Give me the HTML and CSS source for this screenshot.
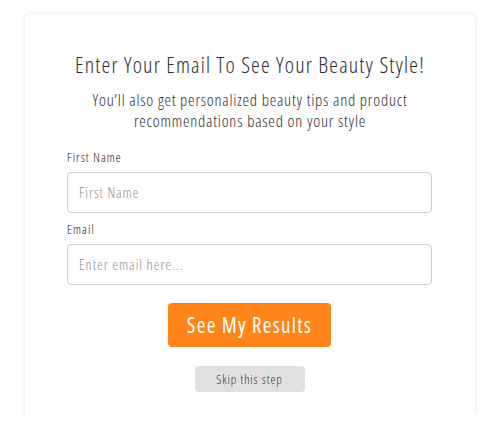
FILE: index.html
```html
<!DOCTYPE html>
<html>
<head>
<meta charset="utf-8">
<link rel="stylesheet" href="styles.css">
</head>
<body>
<div class="card">
  <h1 class="title">Enter Your Email To See Your Beauty Style!</h1>
  <p class="subtitle">You’ll also get personalized beauty tips and product recommendations based on your style</p>
  <form class="form">
    <label class="label" for="fn">First Name</label>
    <input class="input" id="fn" type="text" placeholder="First Name">
    <label class="label label-email" for="em">Email</label>
    <input class="input" id="em" type="email" placeholder="Enter email here...">
    <div class="actions">
      <button type="button" class="btn-primary">See My Results</button>
      <button type="button" class="btn-skip">Skip this step</button>
    </div>
  </form>
</div>
</body>
</html>
```
FILE: styles.css
```css
html, body {
  margin: 0;
  padding: 0;
  background: #fff;
}
body {
  font-family: "Open Sans", "Roboto", sans-serif;
  font-stretch: 75%;
  color: #333;
}
.card {
  box-sizing: border-box;
  width: 450px;
  height: 401px;
  margin: 14px 0 0 25px;
  padding: 36px 20px 0 20px;
  background: #fff;
  border-radius: 6px 6px 0 0;
  box-shadow: 0 0 5px rgba(0,0,0,0.12);
  clip-path: inset(-10px -10px 0 -10px);
}
.title {
  margin: 0;
  font-size: 22px;
  line-height: 28px;
  font-weight: 300;
  letter-spacing: 1.17px;
  text-align: center;
  color: #2e2e2e;
  white-space: nowrap;
}
.subtitle {
  margin: 11px 0 0;
  font-size: 16.5px;
  line-height: 21px;
  font-weight: 300;
  letter-spacing: 0.78px;
  text-align: center;
  color: #2e2e2e;
  padding: 0 30px;
}
.form {
  display: flex;
  flex-direction: column;
  margin-top: 19px;
  padding: 0 23px 0 22px;
}
.label {
  font-size: 12.5px;
  line-height: 16px;
  font-weight: 300;
  letter-spacing: 1.1px;
  color: #111;
}
.label-email {
  margin-top: 9px;
}
.input {
  box-sizing: border-box;
  margin-top: 6px;
  width: 100%;
  height: 41px;
  padding: 0 11px;
  border: 1px solid #cccccc;
  border-radius: 4px;
  font-family: inherit;
  font-stretch: inherit;
  font-size: 14.5px;
  font-weight: 300;
  letter-spacing: 0.95px;
  color: #333;
  outline: none;
}
.input::placeholder {
  color: #8f8f8f;
}
.actions {
  display: flex;
  flex-direction: column;
  align-items: center;
  margin-top: 18px;
}
.btn-primary {
  width: 163px;
  height: 44px;
  border: none;
  border-radius: 4px;
  background: #ff851b;
  color: #fff;
  font-family: inherit;
  font-stretch: inherit;
  font-size: 21px;
  letter-spacing: 1.25px;
  padding: 0;
}
.btn-skip {
  margin-top: 19px;
  width: 110px;
  height: 26px;
  border: none;
  border-radius: 4px;
  background: #e0e0e0;
  color: #333;
  font-family: inherit;
  font-stretch: inherit;
  font-size: 12.5px;
  font-weight: 300;
  letter-spacing: 0.9px;
  padding: 0;
}
```
